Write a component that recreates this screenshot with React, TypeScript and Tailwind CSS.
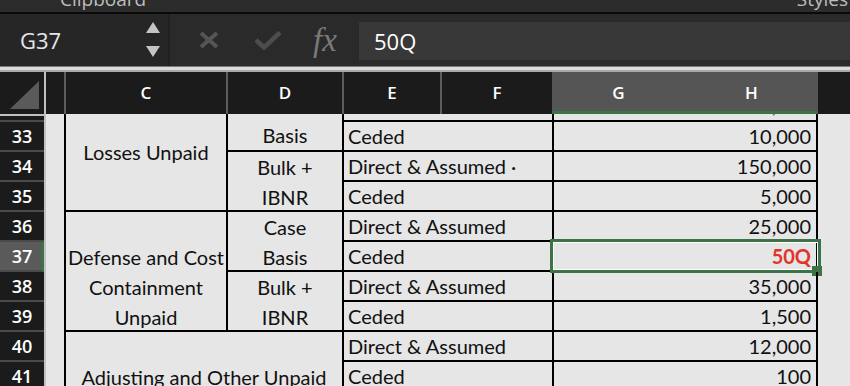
import React from 'react';

const rowStart = [
  'row-start-1',
  'row-start-2',
  'row-start-3',
  'row-start-4',
  'row-start-5',
  'row-start-6',
  'row-start-7',
  'row-start-8',
  'row-start-9',
  'row-start-10',
];

const nums = ['', '33', '34', '35', '36', '37', '38', '39', '40', '41'];
const ef = [
  '',
  'Ceded',
  'Direct & Assumed ·',
  'Ceded',
  'Direct & Assumed',
  'Ceded',
  'Direct & Assumed',
  'Ceded',
  'Direct & Assumed',
  'Ceded',
];
const gh = ['100,000', '10,000', '150,000', '5,000', '25,000', '50Q', '35,000', '1,500', '12,000', '100'];

export default function App() {
  return (
    <div className="w-[850px] h-[386px] overflow-hidden bg-[#2b2b2b] font-[family-name:'Open_Sans',sans-serif]">
      {/* ribbon remnant */}
      <div className="h-[12px] overflow-hidden flex text-[19px] leading-[19px] text-[#bdbdbd] bg-[#2c2c2c]">
        <span className="ml-[60px] -mt-[10px]">Clipboard</span>
        <span className="ml-auto mr-[2px] -mt-[10px]">Styles</span>
      </div>
      <div className="h-[2px] bg-[#0a0a0a]" />

      {/* formula bar */}
      <div className="h-[52px] flex bg-[#2a2a2a]">
        <div className="w-[170px] bg-[#262626] flex items-center border-r-2 border-[#202020]">
          <span className="ml-[20px] text-[22px] text-[#e6e6e6]">G37</span>
          <svg className="ml-auto mr-[8px]" width="14" height="36" viewBox="0 0 14 36">
            <polygon points="0,11 7,0 14,11" fill="#c4c4c4" />
            <polygon points="0,24 14,24 7,35" fill="#c4c4c4" />
          </svg>
        </div>
        <div className="flex-1 flex items-center">
          <svg className="ml-[28px]" width="22" height="18" viewBox="0 0 22 18">
            <line x1="3" y1="2" x2="19" y2="16" stroke="#555" strokeWidth="4" />
            <line x1="19" y1="2" x2="3" y2="16" stroke="#555" strokeWidth="4" />
          </svg>
          <svg className="ml-[34px]" width="28" height="20" viewBox="0 0 28 20">
            <polyline points="2,10 10,17.5 26,2.5" fill="none" stroke="#4d4d4d" strokeWidth="4.5" />
          </svg>
          <span className="ml-[31px] w-[34px] font-[family-name:'Liberation_Serif',serif] italic text-[33px] leading-[33px] text-[#7a7a7a]">
            fx
          </span>
          <div className="ml-[12px] self-start mt-[8px] h-[38px] flex-1 bg-[#383838] flex items-center">
            <span className="ml-[15px] text-[22px] text-white">50Q</span>
          </div>
        </div>
      </div>

      {/* separator */}
      <div className="h-[1px] bg-[#7a7a7a]" />
      <div className="h-[3px] bg-[#dcdcdc]" />
      <div className="h-[2px] bg-[#a8a8a8]" />

      {/* column headers */}
      <div className="h-[42px] flex bg-[#1b1b1b] text-white text-[17px] font-semibold">
        <div className="w-[44px]">
          <svg width="44" height="42" viewBox="0 0 44 42">
            <polygon points="10,37 39,9 39,37" fill="#5a5a5a" />
          </svg>
        </div>
        <div className="w-[2px] bg-[#c0c0c0]" />
        <div className="w-[20px] border-r-2 border-[#5c5c5c]" />
        <div className="w-[162px] border-r-2 border-[#5c5c5c] flex items-center justify-center">C</div>
        <div className="w-[116px] border-r-2 border-[#5c5c5c] flex items-center justify-center">D</div>
        <div className="w-[98px] border-r-2 border-[#5c5c5c] flex items-center justify-center">E</div>
        <div className="w-[110px] flex items-center justify-center">F</div>
        <div className="w-[133px] bg-[#555555] shadow-[inset_0_-3px_0_#3e7348] flex items-center justify-center">G</div>
        <div className="w-[133px] bg-[#555555] shadow-[inset_0_-3px_0_#3e7348] flex items-center justify-center">H</div>
        <div className="w-[32px]" />
      </div>

      {/* data grid */}
      <div className="grid grid-cols-[44px_2px_18px_164px_116px_210px_264px_32px] grid-rows-[8px_repeat(9,30px)] bg-[#e6e6e6] text-[#111] text-[20px] font-[family-name:Lato,sans-serif]">
        {nums.map((n, i) => (
          <div
            key={'rh' + i}
            className={
              'col-start-1 ' +
              rowStart[i] +
              ' border-b-2 border-b-[#4a4a4a] flex items-center justify-center text-[18px] font-semibold text-white font-[family-name:\'Open_Sans\',sans-serif] ' +
              (i === 0 ? 'border-t-2 border-t-[#c0c0c0] bg-[#1b1b1b]' : '') +
              (n === '37' ? 'bg-[#5a5a5a] border-r-[3px] border-r-[#3e7348] pl-[3px]' : i === 0 ? '' : 'bg-[#1b1b1b]')
            }
          >
            {n}
          </div>
        ))}
        <div className="col-start-2 row-start-1 row-span-10 bg-[#c2c2c2]" />

        {/* C column merged blocks */}
        <div className="col-start-4 row-start-1 row-span-4 border-l-2 border-r-2 border-b-2 border-black text-center pt-[23px] leading-[30px]">
          Losses Unpaid
        </div>
        <div className="col-start-4 row-start-5 row-span-4 border-l-2 border-r-2 border-b-2 border-black text-center pt-[30px] leading-[30px]">
          <div>Defense and Cost</div>
          <div>Containment</div>
          <div>Unpaid</div>
        </div>
        <div className="col-start-4 col-span-2 row-start-9 row-span-2 border-l-2 border-r-2 border-black text-center pt-[30px] leading-[30px]">
          Adjusting and Other Unpaid
        </div>

        {/* D column */}
        <div className="col-start-5 row-start-1 row-span-2 border-r-2 border-b-2 border-black text-center pt-[7px] leading-[28px]">
          Basis
        </div>
        <div className="col-start-5 row-start-3 row-span-2 border-r-2 border-b-2 border-black text-center leading-[30px]">
          <div>Bulk +</div>
          <div>IBNR</div>
        </div>
        <div className="col-start-5 row-start-5 row-span-2 border-r-2 border-b-2 border-black text-center leading-[30px]">
          <div>Case</div>
          <div>Basis</div>
        </div>
        <div className="col-start-5 row-start-7 row-span-2 border-r-2 border-b-2 border-black text-center leading-[30px]">
          <div>Bulk +</div>
          <div>IBNR</div>
        </div>

        {/* E/F merged */}
        {ef.map((t, i) => (
          <div
            key={'ef' + i}
            className={'col-start-6 ' + rowStart[i] + ' border-r-2 border-b-2 border-black flex items-center pl-[4px] whitespace-nowrap overflow-hidden'}
          >
            {t}
          </div>
        ))}

        {/* G/H merged */}
        {gh.map((t, i) => (
          <div
            key={'gh' + i}
            className={
              'col-start-7 ' +
              rowStart[i] +
              ' border-r-2 border-b-2 border-black pr-[5px] whitespace-nowrap ' +
              (i === 0 ? 'overflow-hidden text-right' : 'relative flex items-center justify-end')
            }
          >
            {i === 0 ? (
              <div className="-mt-[21px] leading-[24px]">{t}</div>
            ) : i === 5 ? (
              <>
                <span className="font-bold text-[#e0342b]">{t}</span>
                <div className="absolute -left-[4px] -top-[3px] w-[271px] h-[34px] border-[3px] border-[#3e7348]">
                  <div className="w-full h-full border border-white" />
                </div>
                <div className="absolute left-[258px] top-[24px] w-[10px] h-[10px] bg-[#3e7348]" />
              </>
            ) : (
              t
            )}
          </div>
        ))}
      </div>
    </div>
  );
}
